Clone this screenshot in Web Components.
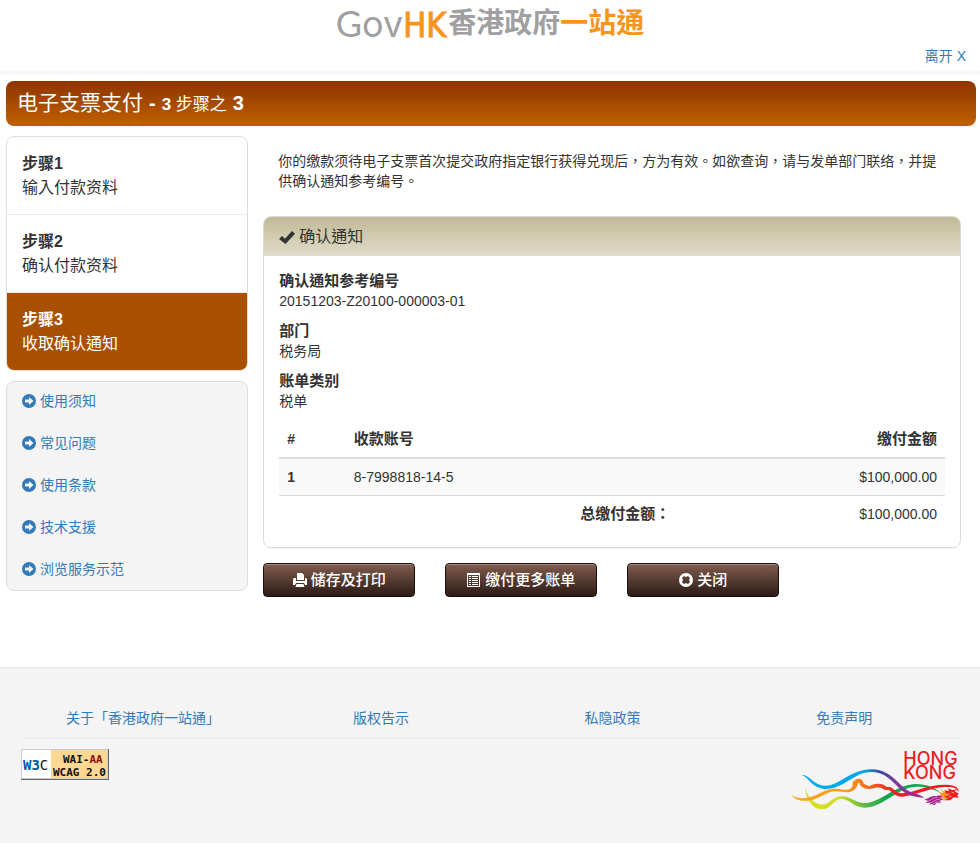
<!DOCTYPE html>
<html lang="zh-HK">
<head>
<meta charset="utf-8">
<meta name="viewport" content="width=device-width, initial-scale=1">
<title>电子支票支付</title>
<style>
	body {
		margin: 0;
		min-height: 100vh;
		display: flex;
		flex-direction: column;
		background: #fff;
		color: #333;
		font: 14px/20px "Liberation Sans", "Noto Sans CJK TC", sans-serif;
		--link: #337ab7;
		--line: #ddd;
	}
	.columns {
		display: grid;
		grid-template-columns: 25% minmax(0, 1fr);
		margin: 10px 5px 70px 6px;
	}
	main {
		padding: 0 14px 0 15px;
	}
	main > p {
		margin: 15px 15px 25px;
	}
	aside {
		display: flex;
		flex-direction: column;
		gap: 10px;
	}
	.plain {
		font-weight: 400;
	}
	.buttons {
		display: flex;
		flex-wrap: wrap;
		gap: 30px;
		margin-top: 15px;
	}
</style>
</head>
<body>
<site-header></site-header>
<page-title><span slot="name">电子支票支付</span><span slot="of">3 <span class="plain">步骤之</span></span><span slot="step">3</span></page-title>
<div class="columns">
	<aside>
		<step-list>
			<step-item><span slot="label">步骤1</span>输入付款资料</step-item>
			<step-item><span slot="label">步骤2</span>确认付款资料</step-item>
			<step-item active><span slot="label">步骤3</span>收取确认通知</step-item>
		</step-list>
		<help-links>
			<help-link>使用须知</help-link>
			<help-link>常见问题</help-link>
			<help-link>使用条款</help-link>
			<help-link>技术支援</help-link>
			<help-link>浏览服务示范</help-link>
		</help-links>
	</aside>
	<main>
		<p>你的缴款须待电子支票首次提交政府指定银行获得兑现后，方为有效。如欲查询，请与发单部门联络，并提供确认通知参考编号。</p>
		<info-panel>
			<span slot="heading">确认通知</span>
			<info-field><span slot="label">确认通知参考编号</span>20151203-Z20100-000003-01</info-field>
			<info-field><span slot="label">部门</span>税务局</info-field>
			<info-field><span slot="label">账单类别</span>税单</info-field>
			<payment-table></payment-table>
		</info-panel>
		<div class="buttons">
			<action-button icon="print">储存及打印</action-button>
			<action-button icon="list">缴付更多账单</action-button>
			<action-button icon="close">关闭</action-button>
		</div>
	</main>
</div>
<site-footer></site-footer>

<script>
const ICONS = {
	arrow: '<path fill-rule="evenodd" d="M7 0a7 7 0 1 0 0 14A7 7 0 0 0 7 0zM7 3l4.5 4L7 11V8.5H3v-3h4z"/>',
	check: '<path d="M0 9l3-3 3 2.800L13 1l3 2.800L6.500 14z"/>',
	print: '<path d="M4 0h5l2 2v5H4zM1 5h2v3h9V5h1l1 1v6h-2l-1-2H3l-1 2H0V6zM3.500 11h7l1 3h-9z"/>',
	list: '<path fill-rule="evenodd" d="M0 0h13v14H0zM1 2v11h11V2z"/><path d="M2 3h2v1H2zM5 3h6v1H5zM2 5h2v1H2zM5 5h6v1H5zM2 7h2v1H2zM5 7h6v1H5zM2 9h2v1H2zM5 9h6v1H5zM2 11h2v1H2zM5 11h6v1H5z"/>',
	close: '<path fill-rule="evenodd" d="M7 0a7 7 0 1 0 0 14A7 7 0 0 0 7 0zM5 3l2 1 2-1 2 2-1 2 1 2-2 2-2-1-2 1-2-2 1-2-1-2z"/>'
};

function icon(name, width = 14) {
	return `<svg width="${width}" height="14" viewBox="0 0 ${width} 14" fill="currentColor" aria-hidden="true">${ICONS[name]}</svg>`;
}

class BaseElement extends HTMLElement {
	constructor() {
		super();
		this.attachShadow({ mode: 'open' });
	}

	connectedCallback() {
		this.shadowRoot.innerHTML = this.render();
	}
}

class SiteHeader extends BaseElement {
	render() {
		return `
      <style>
        :host {
          display: block;
          border-bottom: 4px solid #f8f8f8;
        }
        .logo {
          display: flex;
          justify-content: center;
          align-items: flex-start;
          height: 46px;
          color: #a0a0a2;
          font: 700 28px/42px "Noto Sans CJK TC", sans-serif;
        }
        .latin {
          margin-right: 2px;
          font-family: Lato, sans-serif;
          font-size: 36px;
          font-weight: 400;
          line-height: 46px;
        }
        .small {
          font-family: Inter, sans-serif;
        }
        .orange {
          color: #f7941d;
        }
        .latin .orange {
          font-family: "DejaVu Sans Condensed", "DejaVu Sans", sans-serif;
          font-size: 34px;
          -webkit-text-stroke: 1px #f7941d;
        }
        .exit {
          padding: 0 14px 5px;
          text-align: right;
        }
        a {
          color: var(--link);
          text-decoration: none;
        }
      </style>
      <div class="logo">
        <span class="latin">G<span class="small">ov</span><span class="orange">HK</span></span>
        <span>香港政府</span><span class="orange">一站通</span>
      </div>
      <div class="exit"><a href="#">离开 X</a></div>
    `;
	}
}

class PageTitle extends BaseElement {
	render() {
		return `
      <style>
        :host {
          display: block;
          margin: 6px 4px 0 6px;
        }
        h1 {
          display: flex;
          align-items: baseline;
          gap: 6px;
          box-sizing: border-box;
          min-height: 45px;
          margin: 0;
          padding: 0 11px;
          border-radius: 8px;
          background: linear-gradient(#8c3500, #c06000);
          color: #fff;
          font-size: 20px;
          font-weight: bold;
          line-height: 43px;
        }
        .name {
          font-size: 21px;
          font-weight: 400;
        }
        .of {
          font-size: 17px;
        }
      </style>
      <h1><span class="name"><slot name="name"></slot></span><span>-</span><span class="of"><slot name="of"></slot></span><slot name="step"></slot></h1>
    `;
	}
}

class StepList extends BaseElement {
	render() {
		return `
      <style>
        :host {
          display: block;
          overflow: hidden;
          border: 1px solid var(--line);
          border-radius: 8px;
        }
      </style>
      <slot></slot>
    `;
	}
}

class StepItem extends BaseElement {
	render() {
		return `
      <style>
        :host {
          display: block;
          padding: 15px 15px 14px;
          border-bottom: 1px solid #eee;
          font-size: 16px;
          line-height: 24px;
        }
        :host(:last-child) {
          border-bottom: 0;
        }
        :host([active]) {
          background: #a94f00;
          color: #fff;
        }
        strong {
          display: block;
        }
      </style>
      <strong><slot name="label"></slot></strong>
      <slot></slot>
    `;
	}
}

class HelpLinks extends BaseElement {
	render() {
		return `
      <style>
        :host {
          display: flex;
          flex-direction: column;
          gap: 22px;
          padding: 9px 15px 11px;
          border: 1px solid var(--line);
          border-radius: 8px;
          background: #f4f4f4;
        }
      </style>
      <slot></slot>
    `;
	}
}

class HelpLink extends BaseElement {
	render() {
		return `
      <style>
        :host {
          display: block;
        }
        a {
          display: flex;
          align-items: center;
          gap: 4px;
          color: var(--link);
          text-decoration: none;
        }
      </style>
      <a href="#">${icon('arrow')}<span><slot></slot></span></a>
    `;
	}
}

class InfoPanel extends BaseElement {
	render() {
		return `
      <style>
        :host {
          display: block;
          overflow: hidden;
          border: 1px solid var(--line);
          border-radius: 8px;
          box-shadow: 0 1px 1px rgba(0, 0, 0, .05);
        }
        h2 {
          display: flex;
          align-items: center;
          gap: 4px;
          margin: 0;
          padding: 2px 15px 0;
          border-bottom: 1px solid var(--line);
          background: linear-gradient(#c1ba98, #dfdac6);
          font-size: 16px;
          font-weight: 400;
          line-height: 36px;
        }
        .body {
          padding: 15px;
        }
      </style>
      <h2>${icon('check', 16)}<slot name="heading"></slot></h2>
      <div class="body"><slot></slot></div>
    `;
	}
}

class InfoField extends BaseElement {
	render() {
		return `
      <style>
        :host {
          display: block;
          margin-bottom: 10px;
        }
        strong {
          display: block;
          font-size: 15px;
        }
      </style>
      <strong><slot name="label"></slot></strong>
      <slot></slot>
    `;
	}
}

class PaymentTable extends BaseElement {
	render() {
		return `
      <style>
        :host {
          display: block;
        }
        table {
          width: 100%;
          border-spacing: 0;
          table-layout: fixed;
        }
        th, td {
          box-sizing: border-box;
          padding: 8px;
          text-align: left;
        }
        .cjk {
          font-size: 15px;
        }
        .no {
          width: 10%;
        }
        .account {
          width: 34%;
        }
        .amount {
          text-align: right;
        }
        thead th {
          border-bottom: 2px solid var(--line);
        }
        tbody th, tbody td {
          border-bottom: 1px solid var(--line);
          background: #f9f9f9;
        }
      </style>
      <table>
        <thead>
          <tr><th class="no">#</th><th class="account cjk">收款账号</th><th></th><th class="amount cjk">缴付金额</th></tr>
        </thead>
        <tbody>
          <tr><th>1</th><td>8-7998818-14-5</td><td></td><td class="amount">$100,000.00</td></tr>
        </tbody>
        <tfoot>
          <tr><td></td><td></td><th class="cjk">总缴付金额：</th><td class="amount">$100,000.00</td></tr>
        </tfoot>
      </table>
    `;
	}
}

class ActionButton extends BaseElement {
	render() {
		return `
      <style>
        :host {
          display: block;
        }
        button {
          display: flex;
          justify-content: center;
          align-items: center;
          gap: 4px;
          width: 152px;
          height: 34px;
          padding: 0;
          border: 1px solid #1c100b;
          border-radius: 4px;
          background: linear-gradient(#805c4e, #2c1b15);
          box-shadow: inset 0 1px 0 #a08b82;
          color: #fff;
          font: 500 15px/20px "Liberation Sans", "Noto Sans CJK TC", sans-serif;
          cursor: pointer;
        }
      </style>
      <button type="button">${icon(this.getAttribute('icon'))}<span><slot></slot></span></button>
    `;
	}
}

class SiteFooter extends BaseElement {
	render() {
		return `
      <style>
        :host {
          display: block;
          flex: 1;
          padding: 40px 20px 32px 21px;
          border-top: 1px solid #e5e5e5;
          background: #f4f4f4;
        }
        nav {
          display: grid;
          grid-template-columns: 26% 1fr 1fr 1fr;
          padding-bottom: 10px;
          border-bottom: 1px solid #eaeaea;
          text-align: center;
        }
        a {
          color: var(--link);
          text-decoration: none;
        }
        .logos {
          display: flex;
          justify-content: space-between;
          align-items: flex-start;
          padding-top: 10px;
        }
        svg {
          display: block;
        }
      </style>
      <nav>
        <a href="#">关于「香港政府一站通」</a>
        <a href="#">版权告示</a>
        <a href="#">私隐政策</a>
        <a href="#">免责声明</a>
      </nav>
      <div class="logos">
        <a href="#">${this.wcagBadge()}</a>
        <a href="#">${this.dragonLogo()}</a>
      </div>
    `;
	}

	wcagBadge() {
		return `
      <svg width="88" height="31" viewBox="0 0 88 31">
        <path fill="#666" d="M0 0h88v31H0z"/>
        <path fill="#ccc" d="M0 0h87v30H0z"/>
        <path fill="#fff" d="M1 1h29v28H1z"/>
        <path fill="#fed893" d="M30 1h56v28H30z"/>
        <text x="2" y="21" fill="#005a9c" font-family="DejaVu Sans Mono, monospace" font-size="14" font-weight="bold">W3<tspan fill="#111" font-weight="normal">C</tspan></text>
        <text fill="#111" font-family="DejaVu Sans Mono, monospace" font-size="11" font-weight="bold">
          <tspan x="42" y="14">WAI-<tspan fill="#8b1010">AA</tspan></tspan><tspan x="32" y="27">WCAG 2.0</tspan>
        </text>
      </svg>
    `;
	}

	dragonLogo() {
		return `
      <svg width="170" height="60" viewBox="30 30 510 180">
        <defs>
          <linearGradient id="sky" gradientUnits="userSpaceOnUse" x1="60" y1="0" x2="435" y2="0">
            <stop offset="0" stop-color="#00aeef"/>
            <stop offset=".52" stop-color="#00a5ea"/>
            <stop offset=".64" stop-color="#3b4ba0"/>
            <stop offset=".75" stop-color="#7b3a9b"/>
            <stop offset="1" stop-color="#a3238e"/>
          </linearGradient>
          <linearGradient id="ridge" gradientUnits="userSpaceOnUse" x1="35" y1="0" x2="537" y2="0">
            <stop offset="0" stop-color="#faa61a"/>
            <stop offset=".32" stop-color="#f99d1c"/>
            <stop offset=".46" stop-color="#f26a21"/>
            <stop offset=".62" stop-color="#ed1c24"/>
            <stop offset="1" stop-color="#ed1c24"/>
          </linearGradient>
          <linearGradient id="land" gradientUnits="userSpaceOnUse" x1="75" y1="0" x2="480" y2="0">
            <stop offset="0" stop-color="#d9e021"/>
            <stop offset=".25" stop-color="#cddc28"/>
            <stop offset=".45" stop-color="#5cb947"/>
            <stop offset=".6" stop-color="#0ea650"/>
            <stop offset="1" stop-color="#12a84f"/>
          </linearGradient>
        </defs>
        <path fill="url(#land)" d="M75 145C84 178 103 195 126 197C150 196 160 172 184 172C212 172 224 192 256 192C306 189 340 140 405 135C445 135 464 148 484 162C460 150 438 142 405 143C350 148 312 203 256 206C220 206 208 179 184 179C162 180 152 212 124 211C94 209 78 180 75 145z"/>
        <path fill="url(#ridge)" d="M33 167C52 180 70 179 86 175C118 169 132 148 170 149C190 150 201 157 212 148C224 140 212 127 223 126C230 117 246 117 248 127C251 138 262 138 267 142C278 136 287 133 300 135C313 133 317 146 328 144C342 145 345 163 368 163C410 158 445 135 500 137C526 138 539 147 535 160C532 144 512 143 494 144C450 146 412 168 368 173C340 173 337 156 325 153C311 155 309 146 300 146C287 143 279 150 265 150C252 148 242 145 238 132C231 128 236 141 225 150C212 165 188 159 168 157C138 157 118 182 84 185C60 187 42 180 33 167z"/>
        <path fill="url(#sky)" d="M64 108C91 106 98 139 136 140C183 140 206 92 276 91C342 92 359 153 399 161C415 166 425 169 433 178C419 173 408 174 394 170C350 157 335 101 276 99C220 98 194 150 136 150C93 147 89 115 64 108z"/>
        <path fill="#a3238e" d="M431 181C442 184 452 168 468 172L490 169L481 178L492 181L478 186L484 191L469 191L464 199L455 195L448 197L451 191L437 192L444 186z"/>
        <path fill="none" stroke="#f4b8dc" stroke-width="2" d="M440 187C452 188 458 174 472 175M449 192C461 192 464 180 480 180M460 194C466 194 468 188 476 187"/>
        <path fill="#f7941d" d="M492 171L468 170L484 166L473 158L491 163L481 150L497 161L493 153L510 164L506 180L486 185L496 179L478 177z"/>
        <path fill="#ed1c24" d="M498 163L493 154L507 156L504 148L517 153L532 151L524 157L537 164L531 169L537 176L521 175L511 184L493 184L506 178L493 173L506 169z"/>
        <path fill="none" stroke="#fde2a8" stroke-width="2" d="M501 166L510 165M506 174L515 171M514 159L522 162"/>
        <text fill="#ed1c24" font-family="Inter, sans-serif" font-size="54" font-weight="500"><tspan x="370" y="77">HONG</tspan><tspan x="370" y="120">KONG</tspan></text>
      </svg>
    `;
	}
}

customElements.define('site-header', SiteHeader);
customElements.define('page-title', PageTitle);
customElements.define('step-list', StepList);
customElements.define('step-item', StepItem);
customElements.define('help-links', HelpLinks);
customElements.define('help-link', HelpLink);
customElements.define('info-panel', InfoPanel);
customElements.define('info-field', InfoField);
customElements.define('payment-table', PaymentTable);
customElements.define('action-button', ActionButton);
customElements.define('site-footer', SiteFooter);
</script>
</body>
</html>
